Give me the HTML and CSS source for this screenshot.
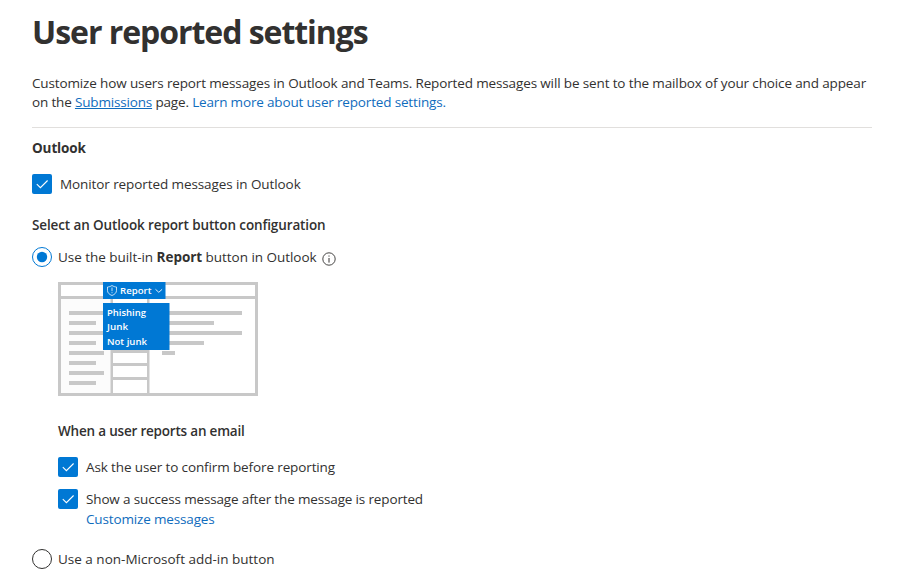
FILE: index.html
```html
<!DOCTYPE html>
<html lang="en">
<head>
<meta charset="utf-8">
<title>User reported settings</title>
<link rel="stylesheet" href="styles.css">
</head>
<body>
<main class="page">
  <h1 class="title"><span>User reported settings</span></h1>
  <p class="intro"><span class="intro-first">Customize how users report messages in Outlook and Teams. Reported messages will be sent to the mailbox of your choice and appear</span><br><span class="intro-second">on the <a class="link underlined">Submissions</a> page. <a class="link">Learn more about user reported settings.</a></span></p>
  <section class="outlook">
    <h2 class="heading outlook-heading"><span>Outlook</span></h2>
    <div class="option monitor">
      <svg class="control" viewBox="0 0 20 20"><rect width="20" height="20" rx="2" fill="#0078d4"/><path d="M4.8 10.2 8.4 13.7 15.6 6.5" fill="none" stroke="#fff" stroke-width="1.1"/></svg>
      <span class="label monitor-label">Monitor reported messages in Outlook</span>
    </div>
    <h3 class="heading config-heading"><span>Select an Outlook report button configuration</span></h3>
    <div class="option radio">
      <svg class="control" viewBox="0 0 20 20"><circle cx="10" cy="10" r="9.5" fill="#fff" stroke="#0078d4"/><circle cx="10" cy="10" r="5.2" fill="#0078d4"/></svg>
      <span class="label builtin-label">Use the built-in <b>Report</b> button in Outlook</span>
      <svg class="info" viewBox="0 0 14 14"><circle cx="7" cy="7" r="6.2" fill="none" stroke="#323130" stroke-width=".9"/><path d="M7 6v4.6M7 3.5v1.1" stroke="#323130" stroke-width="1"/></svg>
    </div>
    <div class="details">
      <svg class="preview" viewBox="0 0 200 114">
        <rect width="200" height="114" fill="#c8c8c8"/>
        <path fill="#fff" d="M3 3h194v11H3zM55 17h34v51H55zM55 71h34v10H55zM55 84h34v11H55zM55 98h34v13H55zM91.500 17H197v94H91.500z"/>
        <path fill="#fcfcfc" d="M3 17h49.500v94H3z"/>
        <path fill="#c8c8c8" d="M11 29h35v4H11zM11 39h27v4H11zM11 49h35v4H11zM11 59h27v4H11zM11 69h35v4H11zM11 79h27v4H11zM11 89h35v4H11zM11 99h27v4H11zM104 29h80v4h-80zM104 39h52v4h-52zM104 49h80v4h-80zM104 59h42v4h-42zM104 69h13v4h-13z"/>
        <path fill="#0078d4" d="M45 0h62.500v17H45zM45 21h66.500v47H45z"/>
        <path d="M54 3.500C52.500 4.500 51 4.900 49.500 5v3.500c0 2.300 1.700 3.900 4.500 5 2.800-1.100 4.500-2.700 4.500-5V5C57 4.900 55.500 4.500 54 3.500zM54 5.500v3.700M54 10.200v1" fill="none" stroke="#fff" stroke-width=".75"/>
        <path d="m97.500 7.300 3.300 3 3.300-3" fill="none" stroke="#fff" stroke-width=".9"/>
        <g class="preview-text">
          <text x="62" y="12" textLength="31.500" lengthAdjust="spacingAndGlyphs">Report</text>
          <text x="49" y="34" textLength="39" lengthAdjust="spacingAndGlyphs">Phishing</text>
          <text x="49" y="48" textLength="21" lengthAdjust="spacingAndGlyphs">Junk</text>
          <text x="49" y="63" textLength="40" lengthAdjust="spacingAndGlyphs">Not junk</text>
        </g>
      </svg>
      <h3 class="heading email-heading"><span>When a user reports an email</span></h3>
      <div class="option">
        <svg class="control" viewBox="0 0 20 20"><rect width="20" height="20" rx="2" fill="#0078d4"/><path d="M4.8 10.2 8.4 13.7 15.6 6.5" fill="none" stroke="#fff" stroke-width="1.1"/></svg>
        <span class="label ask-label">Ask the user to confirm before reporting</span>
      </div>
      <div class="option success">
        <svg class="control" viewBox="0 0 20 20"><rect width="20" height="20" rx="2" fill="#0078d4"/><path d="M4.8 10.2 8.4 13.7 15.6 6.5" fill="none" stroke="#fff" stroke-width="1.1"/></svg>
        <span class="label success-label">Show a success message after the message is reported</span>
      </div>
      <a class="link customize"><span>Customize messages</span></a>
    </div>
    <div class="option radio other">
      <svg class="control" viewBox="0 0 20 20"><circle cx="10" cy="10" r="9.500" fill="#fff" stroke="#323130"/></svg>
      <span class="label other-label">Use a non-Microsoft add-in button</span>
    </div>
  </section>
</main>
</body>
</html>
```
FILE: styles.css
```css
* { box-sizing: border-box; }
body { margin: 0; background: #fff; color: #323130; font: 14px/20px "Open Sans", "Noto Sans", sans-serif; overflow: hidden; }
h1, h2, h3, p { margin: 0; }
svg { display: block; flex: none; }
.page { width: 872px; padding: 12px 0 0 32px; }
.title { font-size: 32px; line-height: 40px; font-weight: 700; letter-spacing: -1.04px; white-space: nowrap; }
.intro { margin-top: 22px; height: 54px; line-height: 19px; border-bottom: 1px solid #e1dfdd; white-space: nowrap; font-size: 13.500px; }
.intro-first { letter-spacing: -0.135px; }
.intro-second { letter-spacing: -0.165px; }
.link { color: #0f6cbd; text-decoration: none; }
.underlined { text-decoration: underline; }
.heading { font-size: 13.500px; line-height: 20px; font-weight: 600; white-space: nowrap; letter-spacing: -0.12px; }
.outlook-heading { margin-top: 10px; font-weight: 700; }
.option { display: flex; align-items: center; height: 20px; gap: 8px; white-space: nowrap; font-size: 13.500px; }
.radio { gap: 6px; }
.control { width: 20px; height: 20px; }
.monitor { margin-top: 16px; }
.monitor-label { letter-spacing: -0.09px; }
.config-heading { margin: 21px 0 12px; }
.builtin-label { letter-spacing: -0.04px; }
.info { width: 14px; height: 14px; margin-top: 3px; margin-left: -1px; }
.details { padding-left: 26px; }
.preview { width: 200px; height: 114px; margin-top: 15px; }
.preview-text { font: 600 9.500px "Open Sans", sans-serif; fill: #fff; }
.email-heading { margin: 25px 0 16px; letter-spacing: -0.2px; }
.ask-label { letter-spacing: -0.12px; }
.success { margin-top: 12px; }
.success-label { letter-spacing: -0.15px; }
.customize { display: block; margin-left: 28px; font-size: 13.500px; letter-spacing: -0.15px; }
.other { margin-top: 20px; }
```
